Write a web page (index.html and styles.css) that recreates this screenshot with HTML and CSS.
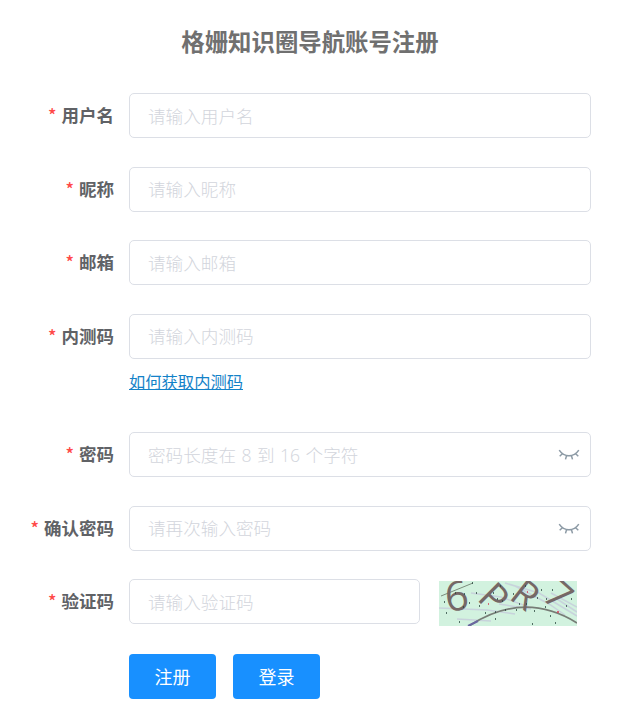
FILE: index.html
```html
<!DOCTYPE html>
<html lang="zh-CN">
<head>
  <meta charset="UTF-8">
  <meta name="viewport" content="width=device-width, initial-scale=1.0">
  <title>格姗知识圈导航账号注册</title>
  <link rel="stylesheet" href="styles.css">
</head>
<body>
  <h1 class="title">格姗知识圈导航账号注册</h1>

  <form class="form">
    <div class="form-item">
      <label class="label" for="username">用户名</label>
      <input class="input" type="text" id="username" placeholder="请输入用户名">
    </div>

    <div class="form-item">
      <label class="label" for="nickname">昵称</label>
      <input class="input" type="text" id="nickname" placeholder="请输入昵称">
    </div>

    <div class="form-item">
      <label class="label" for="email">邮箱</label>
      <input class="input" type="text" id="email" placeholder="请输入邮箱">
    </div>

    <div class="form-item form-item-code">
      <label class="label" for="code">内测码</label>
      <div class="field">
        <input class="input" type="text" id="code" placeholder="请输入内测码">
        <a class="link" href="#">如何获取内测码</a>
      </div>
    </div>

    <div class="form-item">
      <label class="label" for="password">密码</label>
      <div class="password">
        <input class="input" type="password" id="password" placeholder="密码长度在 8 到 16 个字符">
        <svg class="eye" viewBox="0 0 22 14">
          <path d="M1.2 2.2Q5 7.8 11 7.8T20.8 2.2M4.6 5.5L1.7 8.2M8.6 7.5L7.5 11.4M13.4 7.5L14.5 11.4M17.4 5.5L20.3 8.2"/>
        </svg>
      </div>
    </div>

    <div class="form-item">
      <label class="label" for="confirm">确认密码</label>
      <div class="password">
        <input class="input" type="password" id="confirm" placeholder="请再次输入密码">
        <svg class="eye" viewBox="0 0 22 14">
          <path d="M1.2 2.2Q5 7.8 11 7.8T20.8 2.2M4.6 5.5L1.7 8.2M8.6 7.5L7.5 11.4M13.4 7.5L14.5 11.4M17.4 5.5L20.3 8.2"/>
        </svg>
      </div>
    </div>

    <div class="form-item form-item-captcha">
      <label class="label" for="captcha">验证码</label>
      <div class="captcha-row">
        <input class="input" type="text" id="captcha" placeholder="请输入验证码">
        <svg class="captcha" viewBox="0 0 138 45">
          <rect width="138" height="45" fill="#d2f2df"/>
          <g fill="none" stroke="#c3c6da" stroke-width="1.5" opacity=".7">
            <path d="M0 27L48 29L76 33M18 38L52 40M32 12L62 16L90 26M66 2L100 12L138 35M76 5L110 23L126 34M112 12L138 26M60 23L92 28M118 18L138 31"/>
          </g>
          <path d="M2 15L34 2" fill="none" stroke="#7b8c7c"/>
          <path d="M30 45Q85 9 138 42" fill="none" stroke="#777d76" stroke-width="1.7"/>
          <path d="M29 45L39 40" stroke="#6a68a0" stroke-width="2"/>
          <g class="captcha-text">
            <text transform="translate(8 31) rotate(-8)" font-size="41">6</text>
            <text transform="translate(37 18) rotate(45)" font-size="39">P</text>
            <text transform="translate(69 17) rotate(38)" font-size="38">R</text>
            <text transform="translate(102 17) rotate(42)" font-size="39">7</text>
          </g>
          <path d="M5 21h1m1 11h1m8-20h1m8 1h1m4 9h1m-7 4h1m8-24h1m3 10h1m2 13h1m5 7h1m7-20h1m3 6h1m2-13h1m-6 26h1m9-2h1m-4-9h1m10-7h1m5 10h1m-4 6h1m8-24h1m0 18h1m10-6h1m-4 13h1m6-21h1m4 9h1m3 17h1m-6-9h1m6-17h1M20 41h1m35-3h1m36 5h1m22-1h1m10-17h1m4-7h1" fill="none" stroke="#27443d" stroke-width="1.4"/>
          <path d="M49 23h1M118 31h2M88 11h1" stroke="#d33e55" stroke-width="1.5"/>
        </svg>
      </div>
    </div>

    <div class="buttons">
      <button class="btn" type="button">注册</button>
      <button class="btn" type="button">登录</button>
    </div>
  </form>
</body>
</html>
```

FILE: styles.css
```css
* {
  box-sizing: border-box;
}
body {
  margin: 0;
  background-color: #fff;
  color: #606266;
  font-family: "Open Sans", "Noto Sans CJK SC", sans-serif;
  font-size: 17.5px;
}
.title {
  margin: 0;
  padding: 26px 2px 0 0;
  height: 93px;
  color: #707070;
  font-size: 23.4px;
  line-height: 32px;
  text-align: center;
}
.form {
  padding-right: 31px;
}
.form-item {
  display: grid;
  grid-template-columns: 114px 1fr;
  column-gap: 15px;
  margin-bottom: 28.5px;
}
.form-item-code {
  margin-bottom: 29px;
}
.form-item-captcha {
  margin-bottom: 28px;
}
.label {
  height: 45px;
  font-weight: bold;
  line-height: 45px;
  text-align: right;
}
.label::before {
  content: "*";
  margin-right: 5px;
  color: #ff4949;
  font-family: "Noto Sans CJK SC", sans-serif;
  font-size: 17.5px;
  font-weight: 500;
  line-height: 1;
}
.input {
  display: block;
  width: 100%;
  height: 45px;
  padding: 0 19px 0 18px;
  border: 1px solid #dcdfe6;
  border-radius: 5px;
  background-color: #fff;
  color: #606266;
  font-family: inherit;
  font-size: 17.6px;
  outline: none;
}
.input::placeholder {
  color: #d2d5dc;
  font-weight: 300;
  word-spacing: 0.9px;
}
.link {
  display: block;
  width: max-content;
  height: 44.5px;
  padding-top: 11px;
  color: #1482c8;
  font-size: 16.3px;
  line-height: 25px;
}
.password {
  position: relative;
}
.eye {
  position: absolute;
  top: 16px;
  right: 11px;
  width: 22px;
  height: 14px;
  fill: none;
  stroke: #8c9aa5;
  stroke-width: 1.5;
}
.captcha-row {
  display: grid;
  grid-template-columns: 291px 138px;
  column-gap: 19px;
}
.captcha {
  width: 138px;
  height: 45px;
  margin-top: 2px;
}
.captcha-text {
  fill: #756866;
  font-family: "Open Sans", sans-serif;
}
.buttons {
  display: flex;
  gap: 17px;
  padding-left: 129px;
}
.btn {
  width: 87px;
  height: 45px;
  padding: 0 0 2px;
  border: none;
  border-radius: 4px;
  background-color: #1890ff;
  color: #fff;
  font-family: inherit;
  font-size: 18px;
  cursor: pointer;
}
```
